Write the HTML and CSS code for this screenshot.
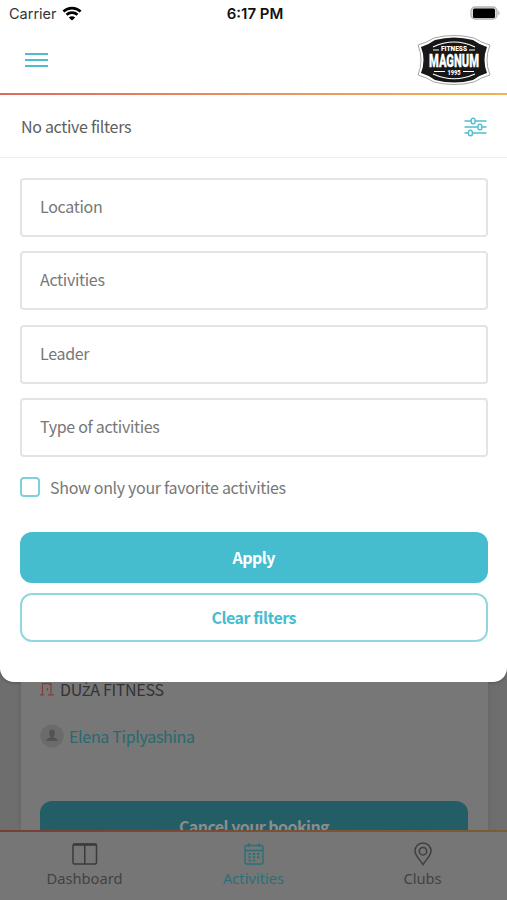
FILE: index.html
```html
<!DOCTYPE html>
<html lang="en">
<head>
<meta charset="utf-8">
<title>Activities</title>
<link rel="stylesheet" href="styles.css">
</head>
<body>
<div class="app">
  <section class="sheet">
    <div class="status">
      <div class="carrier"><span>Carrier</span>
        <svg width="20" height="15" viewBox="0 0 20 15"><g fill="none" stroke="#000" stroke-width="2.7"><path d="M1.4 5.5C6.3.9 13.7.9 18.6 5.5"/><path d="M4.5 8.8c3.1-2.8 7.9-2.8 11 0"/></g><path d="M6.8 11.4c1.800-1.700 4.600-1.700 6.400 0L10 14.500z"/></svg>
      </div>
      <div class="time">6:17 PM</div>
      <svg class="battery" width="31" height="15" viewBox="0 0 31 15"><rect x="1" y="1" width="26" height="12" rx="4" fill="#ddd" stroke="#b5b5b5" stroke-width="1.300"/><rect x="3" y="2.500" width="22" height="9.500" rx="1.500"/><path d="M28.400 4.500q2.500 2.500 0 5z" fill="#aaa"/></svg>
    </div>
    <header class="header">
      <div class="menu"><i></i><i></i><i></i></div>
      <svg class="logo" width="74" height="50" viewBox="0 0 74 50">
        <path d="M1 10Q9 8 17 3Q37-2 57 3Q65 8 73 10Q67 25 73 40Q65 42 57 47Q37 52 17 47Q9 42 1 40Q7 25 1 10Z" fill="#fff" stroke="#a5a5a5" stroke-width="1"/>
        <path d="M4 12Q11 10 18 5Q37 0 56 5Q63 10 70 12Q65 25 70 38Q63 40 56 45Q37 50 18 45Q11 40 4 38Q9 25 4 12Z" fill="#171717"/>
        <g fill="none" stroke="#fff" stroke-width="1.200"><path d="M16 12Q37 2 58 12M16 39Q37 48.500 58 39M16 15h6M52 15h6M17 36.500h11M46 36.500h11"/></g>
        <g fill="#fff" text-anchor="middle" class="logo-text"><text x="37" y="16" font-size="8" textLength="26" lengthAdjust="spacingAndGlyphs">FITNESS</text><text x="37" y="39.500" font-size="7.500" textLength="13" lengthAdjust="spacingAndGlyphs">1995</text><text x="37" y="32" font-size="17.500" textLength="50" lengthAdjust="spacingAndGlyphs" stroke="#fff" stroke-width=".3">MAGNUM</text></g>
      </svg>
    </header>
    <div class="rule"></div>
    <div class="summary"><span>No active filters</span>
      <svg width="23" height="20" viewBox="0 0 23 20" fill="none" stroke="#4fbfd0" stroke-width="1.400"><path d="M.5 4h6.700M11 4h11.500M.5 10h13.500M17.800 10h4.700M.5 16H4.500M8.300 16h14.200"/><rect x="7.200" y="1.300" width="3.800" height="5.400" rx="1.800"/><rect x="14" y="7.300" width="3.800" height="5.400" rx="1.800"/><rect x="4.500" y="13.300" width="3.800" height="5.400" rx="1.800"/></svg>
    </div>
    <div class="form">
      <div class="field">Location</div>
      <div class="field">Activities</div>
      <div class="field">Leader</div>
      <div class="field">Type of activities</div>
      <div class="check"><i></i><span>Show only your favorite activities</span></div>
      <div class="button apply">Apply</div>
      <div class="button clear">Clear filters</div>
    </div>
  </section>
  <main class="behind">
    <div class="card">
      <div class="room"><svg width="14" height="14" viewBox="0 0 14 14" fill="none" stroke="#853d37" stroke-width="1.200"><path d="M0 12.800h4M2.500 12.800V1.600H11V12.800H14M8 12.800h3M8.500 1.600L11 3M7.500 6v2.500"/></svg><span>DU<span class="accented">Ż</span>A FITNESS</span></div>
      <div class="leader"><svg width="24" height="24" viewBox="0 0 24 24"><circle cx="12" cy="12" r="11.500" fill="#6b6b6b"/><ellipse cx="12" cy="9" rx="2.800" ry="3.500" fill="#505253"/><path d="M6.500 17q0-2.500 4-3.700V11h3v2.300q4 1.200 4 3.700z" fill="#505253"/></svg><span>Elena Tiplyashina</span></div>
      <div class="cancel">Cancel your booking</div>
    </div>
  </main>
  <div class="rule dim"></div>
  <nav class="tabs">
    <div class="tab"><svg width="26" height="24" viewBox="0 0 26 24" fill="none" stroke="#3b3b3b" stroke-width="1.500"><rect x="1" y="2" width="23.500" height="20" rx="1.500"/><path d="M12.750 2v20"/><path d="M1 2.700h23.500" stroke-width="2.200"/></svg><span>Dashboard</span></div>
    <div class="tab active"><svg width="26" height="24" viewBox="0 0 26 24" fill="none" stroke="#2a7079" stroke-width="1.400"><rect x="4" y="3.500" width="18" height="18.500" rx="2"/><path d="M4 8.500h18M8 1v4M18 1v4"/><path d="M7.500 12h11M7.500 15.300h11M7.500 18.600h7" stroke-width="2" stroke-dasharray="2.300 2"/></svg><span>Activities</span></div>
    <div class="tab"><svg width="26" height="24" viewBox="0 0 26 24" fill="none" stroke="#3f3f3f" stroke-width="1.500"><path d="M13 22.500C10 18 5 13.500 5 9a8 8 0 0 1 16 0c0 4.500-5 9-8 13.500z"/><circle cx="13" cy="9.200" r="3.700"/></svg><span>Clubs</span></div>
  </nav>
</div>
</body>
</html>
```
FILE: styles.css
```css
* { box-sizing: border-box; }
body { margin: 0; background: #6e6e6e; }
svg { display: block; flex: none; }
.app {
  width: 507px; height: 900px; overflow: hidden;
  display: flex; flex-direction: column;
  font-family: "Noto Sans CJK SC", "Noto Sans", sans-serif;
  font-size: 16px; line-height: 24px; letter-spacing: -.31px; white-space: nowrap;
}
.sheet { flex: none; height: 682px; background: #fff; border-radius: 0 0 14px 14px; box-shadow: 0 1px 3px #555; }
.status {
  height: 28px; padding: 0 6px 0 9px;
  display: grid; grid-template-columns: 1fr auto 1fr; align-items: center;
  font-family: Inter, sans-serif; font-size: 14.5px; letter-spacing: 0;
}
.carrier { display: flex; align-items: center; gap: 5px; color: #333; }
.carrier svg { margin-bottom: 2px; }
.time { font-weight: 600; font-size: 15px; color: #111; }
.battery { justify-self: end; margin-bottom: 1px; }
.header { height: 65px; padding: 0 16px 2px 25px; display: flex; align-items: center; justify-content: space-between; }
.menu { display: grid; gap: 4px; width: 23px; }
.menu i { height: 2px; background: #4fbdcd; }
.logo { overflow: visible; }
.logo-text { font-family: Roboto, sans-serif; font-weight: 900; letter-spacing: 0; }
.rule { flex: none; height: 2px; background: linear-gradient(90deg, #dc6b5e, #e99063 50%, #f0b354); }
.rule.dim { background: linear-gradient(90deg, #783e35, #7b4f37 50%, #7d5d30); }
.summary {
  height: 63px; padding: 0 20px 0 21px; border-bottom: 1px solid #efefef;
  display: flex; align-items: center; justify-content: space-between; color: #5e5e5e;
}
.summary svg { margin-top: 2px; }
.form { padding: 20px 19.500px 0 20px; }
.field {
  height: 59px; margin-bottom: 14.330px; padding-left: 18px;
  border: 2px solid #e4e4e4; border-radius: 4px; line-height: 53px; color: #777;
}
.check { display: flex; align-items: center; gap: 10px; height: 32px; color: #777; }
.check i { width: 20px; height: 20px; border: 2px solid #7fd0dc; border-radius: 4px; }
.button { border-radius: 12px; text-align: center; font-weight: 700; letter-spacing: -.5px; }
.apply { height: 51px; margin: 29px 0 10px; line-height: 51px; background: #46bccf; color: #fff; }
.clear { height: 49px; line-height: 45px; border: 2px solid #91d6e0; color: #46bccf; }
.behind { flex: 1; min-height: 0; overflow: hidden; padding: 0 19px 0 21px; }
.card { height: 100%; padding: 0 20px 0 19px; background: #777; box-shadow: 0 0 5px #626262; }
.room { display: flex; align-items: center; gap: 6px; height: 28px; padding-bottom: 15px; color: #333; }
.accented { font-family: "Noto Sans", sans-serif; font-size: 15px; line-height: 1; }
.leader { display: flex; align-items: center; gap: 5px; height: 52px; color: #29696f; }
.cancel { height: 51px; margin-top: 39px; border-radius: 12px; background: #235e67; color: #8c8c8c; font-weight: 700; letter-spacing: -.55px; line-height: 51px; text-align: center; }
.tabs { flex: none; height: 68px; display: grid; grid-template-columns: repeat(3, 1fr); background: #767676; font-family: "Noto Sans", sans-serif; font-size: 14.700px; letter-spacing: 0; line-height: 22px; color: #424242; }
.tab { display: flex; flex-direction: column; align-items: center; padding-top: 10px; gap: 1px; }
.active { color: #2a7079; }
```
